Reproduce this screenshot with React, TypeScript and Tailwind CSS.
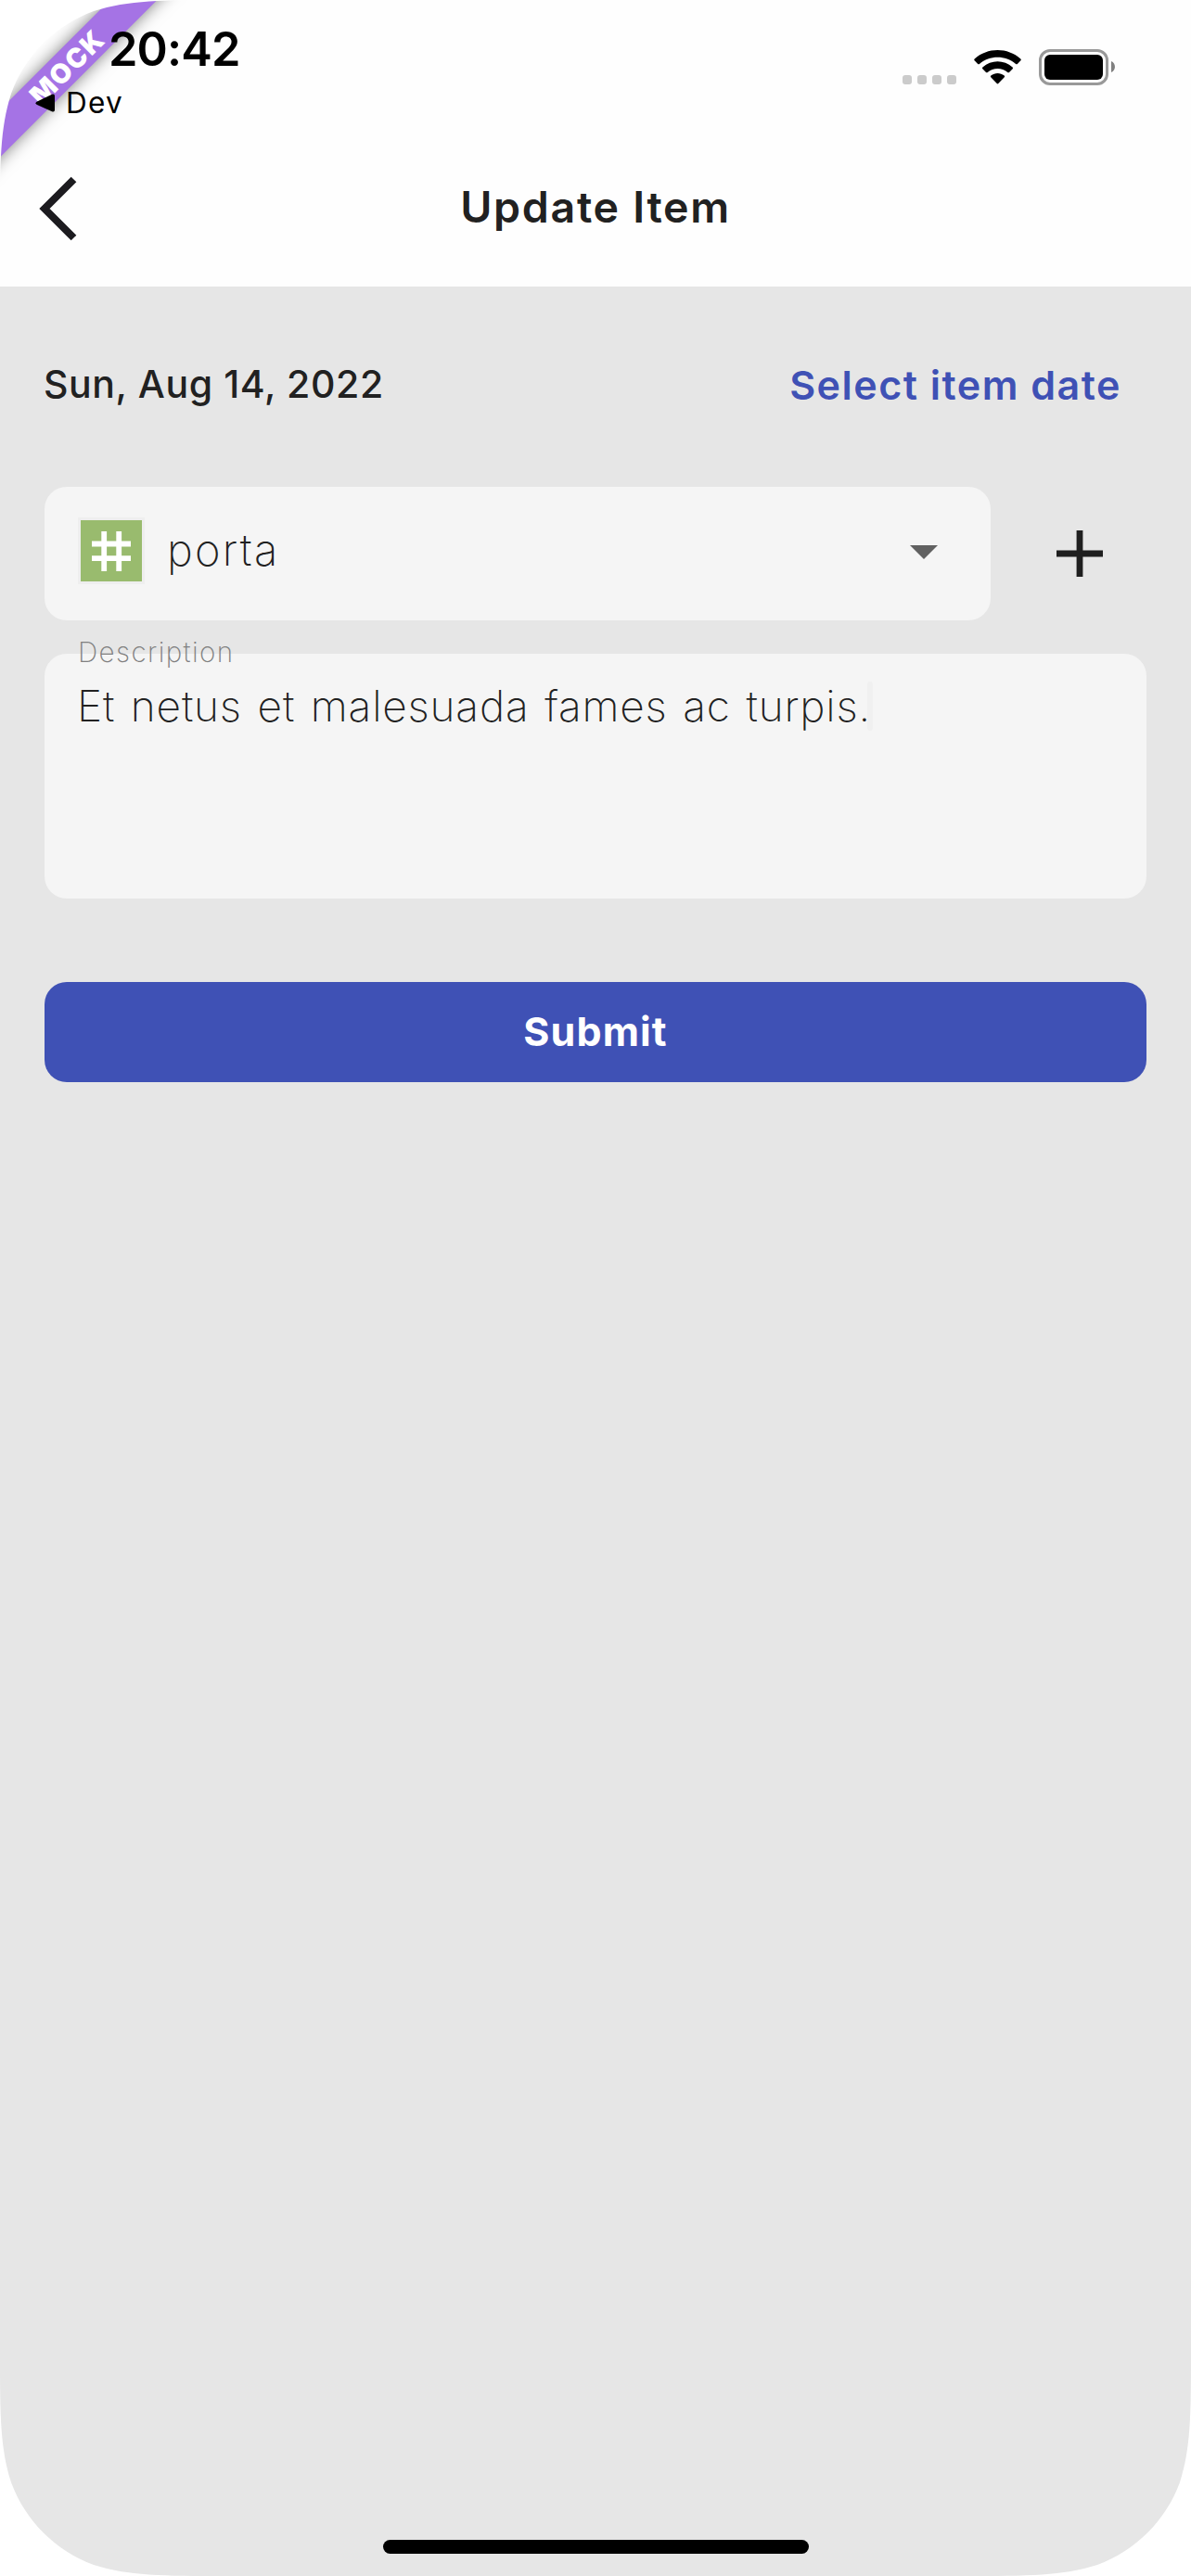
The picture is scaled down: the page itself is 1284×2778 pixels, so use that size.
const CORNER = "M0 0H245C174 0 139 0 101 12C60 27 27 60 12 101C0 139 0 174 0 245Z";

function Corner({ className }: { className: string }) {
  return (
    <svg viewBox="0 0 245 245" className={`pointer-events-none absolute h-[245px] w-[245px] ${className}`}>
      <path d={CORNER} fill="#fff" />
    </svg>
  );
}

function MockBanner() {
  return (
    <div className="pointer-events-none absolute top-0 left-0 h-[240px] w-[240px] overflow-hidden">
      <div className="absolute top-[54px] left-[-78px] flex h-9 w-[300px] -rotate-45 items-center justify-center bg-[#a573e5] shadow-[0_0_18px_rgba(0,0,0,0.5)]">
        <span className="text-[29px] leading-none font-black tracking-[1.5px] text-white">MOCK</span>
      </div>
    </div>
  );
}

function StatusBar() {
  return (
    <div className="flex h-36 justify-between text-black">
      <div className="relative z-10 pt-[28px]">
        <div className="ml-[117px] text-[50.5px] leading-[50px] font-semibold tracking-[-0.86px]">20:42</div>
        <div className="mt-[15px] flex items-center pl-[38px]">
          <svg viewBox="0 0 22 20" className="h-5 w-[22px]">
            <path d="M2 8.5 18 0.7Q21 -0.2 21 2.5V17.5Q21 20.2 18 19.3L2 12Q-1 10.2 2 8.5Z" />
          </svg>
          <span className="ml-[11px] text-[31.5px] leading-9 font-normal tracking-[1.2px]">Dev</span>
        </div>
      </div>
      <div className="flex items-start pt-[53px] pr-[82px]">
        <div className="mt-7 flex gap-1.5">
          {[0, 1, 2, 3].map((i) => (
            <span key={i} className="h-2.5 w-2.5 rounded-[3px] bg-[#cbcbcb]" />
          ))}
        </div>
        <svg viewBox="0 0 52 39" className="ml-[19px] h-[39px] w-[52px]">
          <path d="M0.6 12.2Q-0.2 11.4 0.7 10.5C14.5 -2.2 36.5 -2.2 50.3 10.5Q51.2 11.4 50.4 12.2L46.8 15.9Q46 16.7 45.1 15.9C34 6.2 17 6.2 5.9 15.9Q5 16.7 4.2 15.9Z" />
          <path d="M9.3 21.2Q8.5 20.4 9.4 19.5C18.6 11.1 32.4 11.1 41.6 19.5Q42.5 20.4 41.7 21.2L38 24.9Q37.2 25.7 36.3 24.9C30.2 19.6 20.8 19.6 14.7 24.9Q13.8 25.7 13 24.9Z" />
          <path d="M18.2 30.2Q17.4 29.3 18.3 28.6C22.6 25 28.4 25 32.7 28.6Q33.6 29.3 32.8 30.2L26.3 37Q25.5 37.8 24.7 37Z" />
        </svg>
        <div className="ml-[18px] flex h-[39px] w-[75px] rounded-[12px] border-3 border-[#999] p-[3px]">
          <div className="flex-1 rounded-[6px] bg-black" />
        </div>
        <svg viewBox="0 0 4 12" className="mt-[13px] ml-[3px] h-3 w-1">
          <path d="M0 0C5.3 2 5.3 10 0 12Z" fill="#808080" />
        </svg>
      </div>
    </div>
  );
}

function Header() {
  return (
    <div className="grid h-[165px] grid-cols-[120px_1fr_120px] items-center pb-[6px]">
      <button className="pl-[40px]" aria-label="Back">
        <svg viewBox="0 0 44 70" className="mt-[3px] h-[70px] w-11">
          <path d="M39.5 3.5 8 35 39.5 66.5" fill="none" stroke="#1c1b1f" strokeWidth="8" />
        </svg>
      </button>
      <h1 className="-mt-px text-center text-[46.5px] leading-[56px] font-[590] tracking-[1.7px] text-[#212121]">Update Item</h1>
    </div>
  );
}

function CategorySelect() {
  return (
    <div className="flex h-36 w-[1020px] items-center rounded-3xl bg-[#f5f5f5] pr-[57px] pl-9">
      <div className="-mt-1.5 flex h-[72px] w-[72px] items-center justify-center border-3 border-[#eeeeee] bg-[#99bb6e]">
        <svg viewBox="0 0 42 43" className="h-[43px] w-[42px]">
          <path d="M13.2 0V43M29.2 0V43M0 13.5H42M0 29.2H42" fill="none" stroke="#fff" strokeWidth="5.8" />
        </svg>
      </div>
      <span className="-mt-[9px] ml-6 flex-1 text-[47px] leading-[56px] font-[160] tracking-[2.2px] text-[#212121]">porta</span>
      <svg viewBox="0 0 30 15" className="-mt-[3px] h-[15px] w-[30px]">
        <path d="M0 0H30L15 15Z" fill="#616161" />
      </svg>
    </div>
  );
}

export default function App() {
  return (
    <div className="relative flex h-[2778px] w-[1284px] flex-col overflow-hidden bg-[#fefefe] font-['Inter',sans-serif]">
      <MockBanner />
      <StatusBar />
      <Header />
      <main className="flex flex-1 flex-col bg-[#e6e6e6] px-12 pt-[81px]">
        <div className="flex h-[51px] items-start justify-between">
          <span className="-ml-px text-[41px] leading-[48px] font-[460] tracking-[0.6px] text-[#212121]">Sun, Aug 14, 2022</span>
          <button className="mt-px mr-[27px] text-[43px] leading-[48px] font-[580] tracking-[1.5px] text-[#3f51b5]">Select item date</button>
        </div>
        <div className="mt-[84px] flex items-center">
          <CategorySelect />
          <svg viewBox="0 0 50 50" className="ml-[71px] h-[50px] w-[50px]">
            <path d="M25 0V50M0 25H50" stroke="#1f1f1f" strokeWidth="6.8" />
          </svg>
        </div>
        <div className="relative mt-9 h-[264px] rounded-3xl bg-[#f5f5f5] pt-7 pl-9">
          <label className="absolute -top-5 left-9 text-[29.6px] leading-9 font-[150] tracking-[1.4px] text-[#808080]">Description</label>
          <div className="flex items-center">
            <p className="-ml-px text-[46px] leading-[56px] font-[160] tracking-[0.8px] [word-spacing:3px] text-[#212121]">Et netus et malesuada fames ac turpis.</p>
            <span className="-ml-1 h-[53px] w-1.5 rounded-sm bg-[#f0f0f0]" />
          </div>
        </div>
        <button className="mt-[90px] h-[108px] rounded-3xl bg-[#3f51b5] pb-[3px] text-[43px] leading-[48px] font-[660] tracking-[1.1px] text-white">Submit</button>
        <div className="mt-auto mb-6 h-[15px] w-[459px] self-center rounded-full bg-black" />
      </main>
      <Corner className="top-0 left-0" />
      <Corner className="bottom-0 left-0 -scale-y-100" />
      <Corner className="right-0 bottom-0 -scale-100" />
    </div>
  );
}
